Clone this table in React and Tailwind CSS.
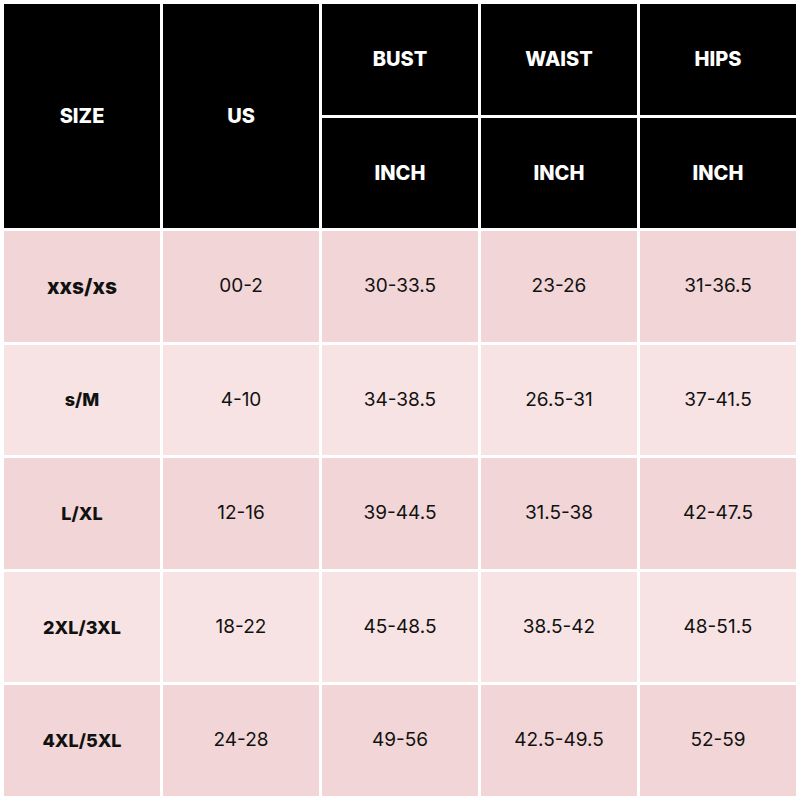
import React from "react";

const rows = [
  ["xxs/xs", "00-2", "30-33.5", "23-26", "31-36.5"],
  ["s/M", "4-10", "34-38.5", "26.5-31", "37-41.5"],
  ["L/XL", "12-16", "39-44.5", "31.5-38", "42-47.5"],
  ["2XL/3XL", "18-22", "45-48.5", "38.5-42", "48-51.5"],
  ["4XL/5XL", "24-28", "49-56", "42.5-49.5", "52-59"],
];

const head = "flex items-center justify-center bg-black text-white text-[20px] font-extrabold";

export default function App() {
  return (
    <div
      className="grid h-[800px] w-[800px] grid-cols-5 grid-rows-7 gap-[3px] bg-white p-[4px]"
      style={{ fontFamily: "Inter, 'Noto Sans', sans-serif" }}
    >
      <div className={`${head} row-span-2`}>SIZE</div>
      <div className={`${head} row-span-2`}>US</div>
      <div className={head}>BUST</div>
      <div className={head}>WAIST</div>
      <div className={head}>HIPS</div>
      <div className={head}>INCH</div>
      <div className={head}>INCH</div>
      <div className={head}>INCH</div>
      {rows.map((row, i) =>
        row.map((cell, j) => (
          <div
            key={`${i}-${j}`}
            className={`flex items-center justify-center text-[#111] ${i % 2 === 0 ? "bg-[#f2d6d7]" : "bg-[#f7e3e3]"} ${j === 0 ? (i === 0 ? "text-[21px] font-extrabold" : "text-[18px] font-extrabold") : "text-[19px]"}`}
          >
            {cell}
          </div>
        ))
      )}
    </div>
  );
}
